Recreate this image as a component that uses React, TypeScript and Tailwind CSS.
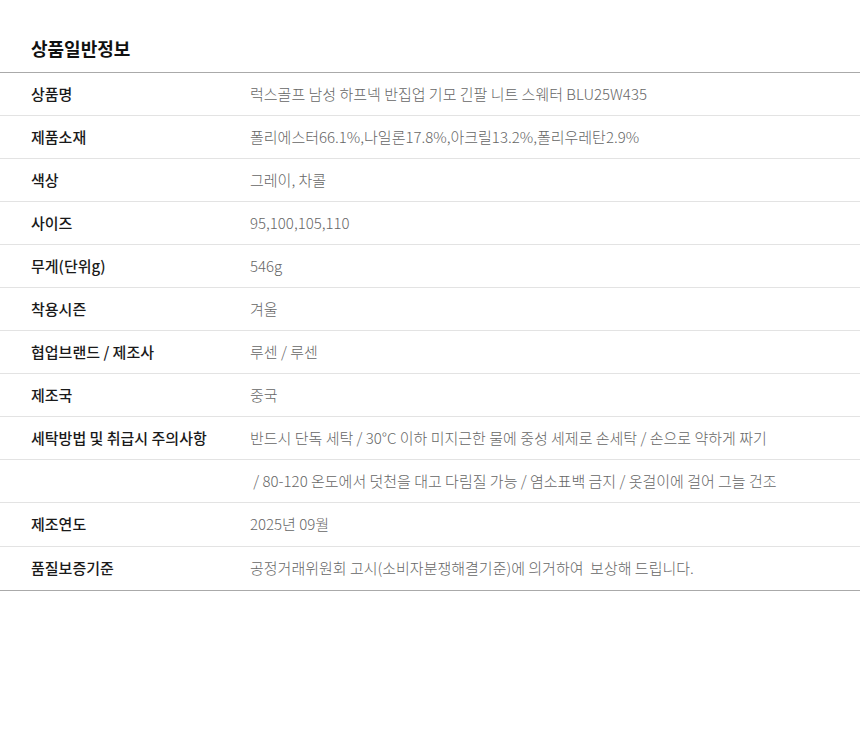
const font = { fontFamily: '"Noto Sans CJK KR", "Noto Sans", sans-serif' };

const rows: [string, string][] = [
  ['상품명', '럭스골프 남성 하프넥 반집업 기모 긴팔 니트 스웨터 BLU25W435'],
  ['제품소재', '폴리에스터66.1%,나일론17.8%,아크릴13.2%,폴리우레탄2.9%'],
  ['색상', '그레이, 차콜'],
  ['사이즈', '95,100,105,110'],
  ['무게(단위g)', '546g'],
  ['착용시즌', '겨울'],
  ['협업브랜드 / 제조사', '루센 / 루센'],
  ['제조국', '중국'],
  ['세탁방법 및 취급시 주의사항', '반드시 단독 세탁 / 30°C 이하 미지근한 물에 중성 세제로 손세탁 / 손으로 약하게 짜기'],
  ['', ' / 80-120 온도에서 덧천을 대고 다림질 가능 / 염소표백 금지 / 옷걸이에 걸어 그늘 건조'],
  ['제조연도', '2025년 09월'],
  ['품질보증기준', '공정거래위원회 고시(소비자분쟁해결기준)에 의거하여  보상해 드립니다.'],
];

export default function App() {
  return (
    <div className="w-[860px] min-h-[740px] bg-white" style={font}>
      <h2 className="pl-[31px] pt-[36px] pb-[12px] text-[18px] leading-[24px] font-bold text-[#111]">
        상품일반정보
      </h2>
      <div className="border-t border-[#aaaaaa]">
        {rows.map(([label, value], i) => (
          <div
            key={i}
            className={
              i === rows.length - 1
                ? 'flex h-[44px] items-center border-b border-[#aaaaaa]'
                : i === rows.length - 2
                  ? 'flex h-[44px] items-center border-b border-[#e3e3e3]'
                  : 'flex h-[43px] items-center border-b border-[#e3e3e3]'
            }
          >
            <div className="w-[250px] shrink-0 pl-[31px] text-[15px] font-medium text-[#1a1a1a]">
              {label}
            </div>
            <div className="whitespace-pre text-[15px] font-light text-[#666666]">{value}</div>
          </div>
        ))}
      </div>
    </div>
  );
}
